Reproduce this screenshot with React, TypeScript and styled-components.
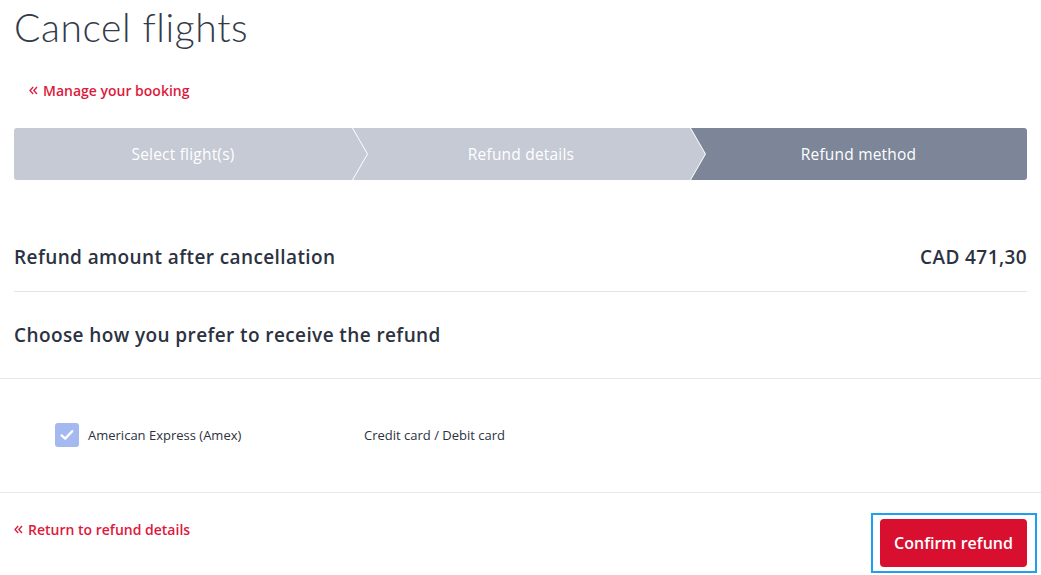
import React from 'react';
import styled, { createGlobalStyle } from 'styled-components';

const GlobalStyle = createGlobalStyle`
  html, body {
    margin: 0;
    padding: 0;
    background: #ffffff;
  }
  body {
    font-family: "Open Sans", "Liberation Sans", sans-serif;
    color: #2c3241;
  }
`;

const Page = styled.div`
  width: 1041px;
  display: flex;
  flex-direction: column;
`;

const Section = styled.div`
  padding: 0 14px;
`;

const Title = styled.h1`
  margin: 0;
  padding-top: 4px;
  font-family: Lato, "Open Sans", sans-serif;
  font-size: 39px;
  font-weight: 300;
  line-height: 46px;
  color: #333a48;
  letter-spacing: 0.6px;
`;

const BackLink = styled.a<{ $indent?: boolean }>`
  display: inline-flex;
  align-items: center;
  gap: 5px;
  margin-left: ${(p) => (p.$indent ? '15px' : '0')};
  color: #dc1a3c;
  font-size: 14px;
  font-weight: 600;
  text-decoration: none;
  cursor: pointer;
`;

const LinkRow = styled.div<{ $top: number }>`
  height: 20px;
  margin-top: ${(p) => p.$top}px;
  display: flex;
  align-items: center;
`;

const Stepper = styled.div`
  margin-top: 28px;
  display: flex;
  height: 52px;
  border-radius: 3px;
  overflow: hidden;
`;

type StepPos = 'first' | 'middle' | 'last';

const shapes: Record<StepPos, string> = {
  first: 'polygon(0 0, calc(100% - 15px) 0, 100% 50%, calc(100% - 15px) 100%, 0 100%)',
  middle:
    'polygon(1px 0, calc(100% - 15px) 0, 100% 50%, calc(100% - 15px) 100%, 1px 100%, 16px 50%)',
  last: 'polygon(1px 0, 100% 0, 100% 100%, 1px 100%, 16px 50%)',
};

const Step = styled.div<{ $pos: StepPos; $width: number; $active?: boolean }>`
  flex: 0 0 ${(p) => p.$width}px;
  box-sizing: border-box;
  display: flex;
  align-items: center;
  justify-content: center;
  background: ${(p) => (p.$active ? '#7c8698' : '#c5cad5')};
  color: #ffffff;
  font-size: 15.5px;
  letter-spacing: 0.2px;
  margin-left: ${(p) => (p.$pos === 'first' ? '0' : '-15px')};
  padding-right: ${(p) => (p.$pos === 'last' ? '0' : '15px')};
  clip-path: ${(p) => shapes[p.$pos]};
`;

const AmountRow = styled.div`
  margin-top: 62px;
  display: flex;
  justify-content: space-between;
  align-items: center;
  height: 30px;
  padding-bottom: 19px;
  border-bottom: 1px solid #e4e4e6;
`;

const Heading = styled.h2`
  margin: 0;
  font-size: 19px;
  font-weight: 600;
  letter-spacing: 0.4px;
  color: #2c3241;
`;

const ChooseRow = styled.div`
  height: 86px;
  display: flex;
  align-items: center;
  padding: 0 14px;
  border-bottom: 1px solid #e8e8ea;
`;

const Options = styled.div`
  height: 112px;
  display: flex;
  align-items: center;
  padding-left: 55px;
  padding-bottom: 1px;
  border-bottom: 1px solid #e8e8ea;
`;

const Option = styled.label<{ $width: number }>`
  width: ${(p) => p.$width}px;
  display: flex;
  align-items: center;
  gap: 9px;
  font-size: 13px;
  font-weight: 500;
  color: #2c3241;
  cursor: pointer;
`;

const Box = styled.span`
  width: 24px;
  height: 24px;
  border-radius: 3px;
  background: #a4b9f0;
  display: flex;
  align-items: center;
  justify-content: center;
`;

const Footer = styled.div`
  display: flex;
  justify-content: space-between;
  align-items: flex-start;
  padding: 20px 14px 0;
`;

const FocusRing = styled.div`
  margin-right: -10px;
  padding: 4px 8px 4px 7px;
  border: 2px solid #1ea0f2;
`;

const ConfirmButton = styled.button`
  width: 147px;
  height: 48px;
  border: 0;
  border-radius: 4px;
  background: #d80f2f;
  color: #ffffff;
  font-family: inherit;
  font-size: 16px;
  font-weight: 600;
  cursor: pointer;
`;

const DoubleChevron = () => (
  <svg width="9" height="9" viewBox="0 0 9 9">
    <path
      d="M4.2 1 L1 4.5 L4.2 8 M8 1 L4.8 4.5 L8 8"
      fill="none"
      stroke="currentColor"
      strokeWidth="1.3"
      strokeLinejoin="round"
    />
  </svg>
);

export default function App() {
  return (
    <Page>
      <GlobalStyle />
      <Section>
        <Title>Cancel flights</Title>
        <LinkRow $top={30}>
          <BackLink $indent>
            <DoubleChevron />
            Manage your booking
          </BackLink>
        </LinkRow>
        <Stepper>
          <Step $pos="first" $width={353}>
            Select flight(s)
          </Step>
          <Step $pos="middle" $width={353}>
            Refund details
          </Step>
          <Step $pos="last" $width={337} $active>
            Refund method
          </Step>
        </Stepper>
        <AmountRow>
          <Heading>Refund amount after cancellation</Heading>
          <Heading>CAD 471,30</Heading>
        </AmountRow>
      </Section>
      <ChooseRow>
        <Heading>Choose how you prefer to receive the refund</Heading>
      </ChooseRow>
      <Options>
        <Option $width={309}>
          <Box>
            <svg width="16" height="16" viewBox="0 0 16 16">
              <path
                d="M2.6 8.4 L6.2 11.6 L13.2 4.2"
                fill="none"
                stroke="#ffffff"
                strokeWidth="2.4"
                strokeLinecap="round"
                strokeLinejoin="round"
              />
            </svg>
          </Box>
          American Express (Amex)
        </Option>
        <Option $width={200}>Credit card / Debit card</Option>
      </Options>
      <Footer>
        <LinkRow $top={6}>
          <BackLink>
            <DoubleChevron />
            Return to refund details
          </BackLink>
        </LinkRow>
        <FocusRing>
          <ConfirmButton>Confirm refund</ConfirmButton>
        </FocusRing>
      </Footer>
    </Page>
  );
}
